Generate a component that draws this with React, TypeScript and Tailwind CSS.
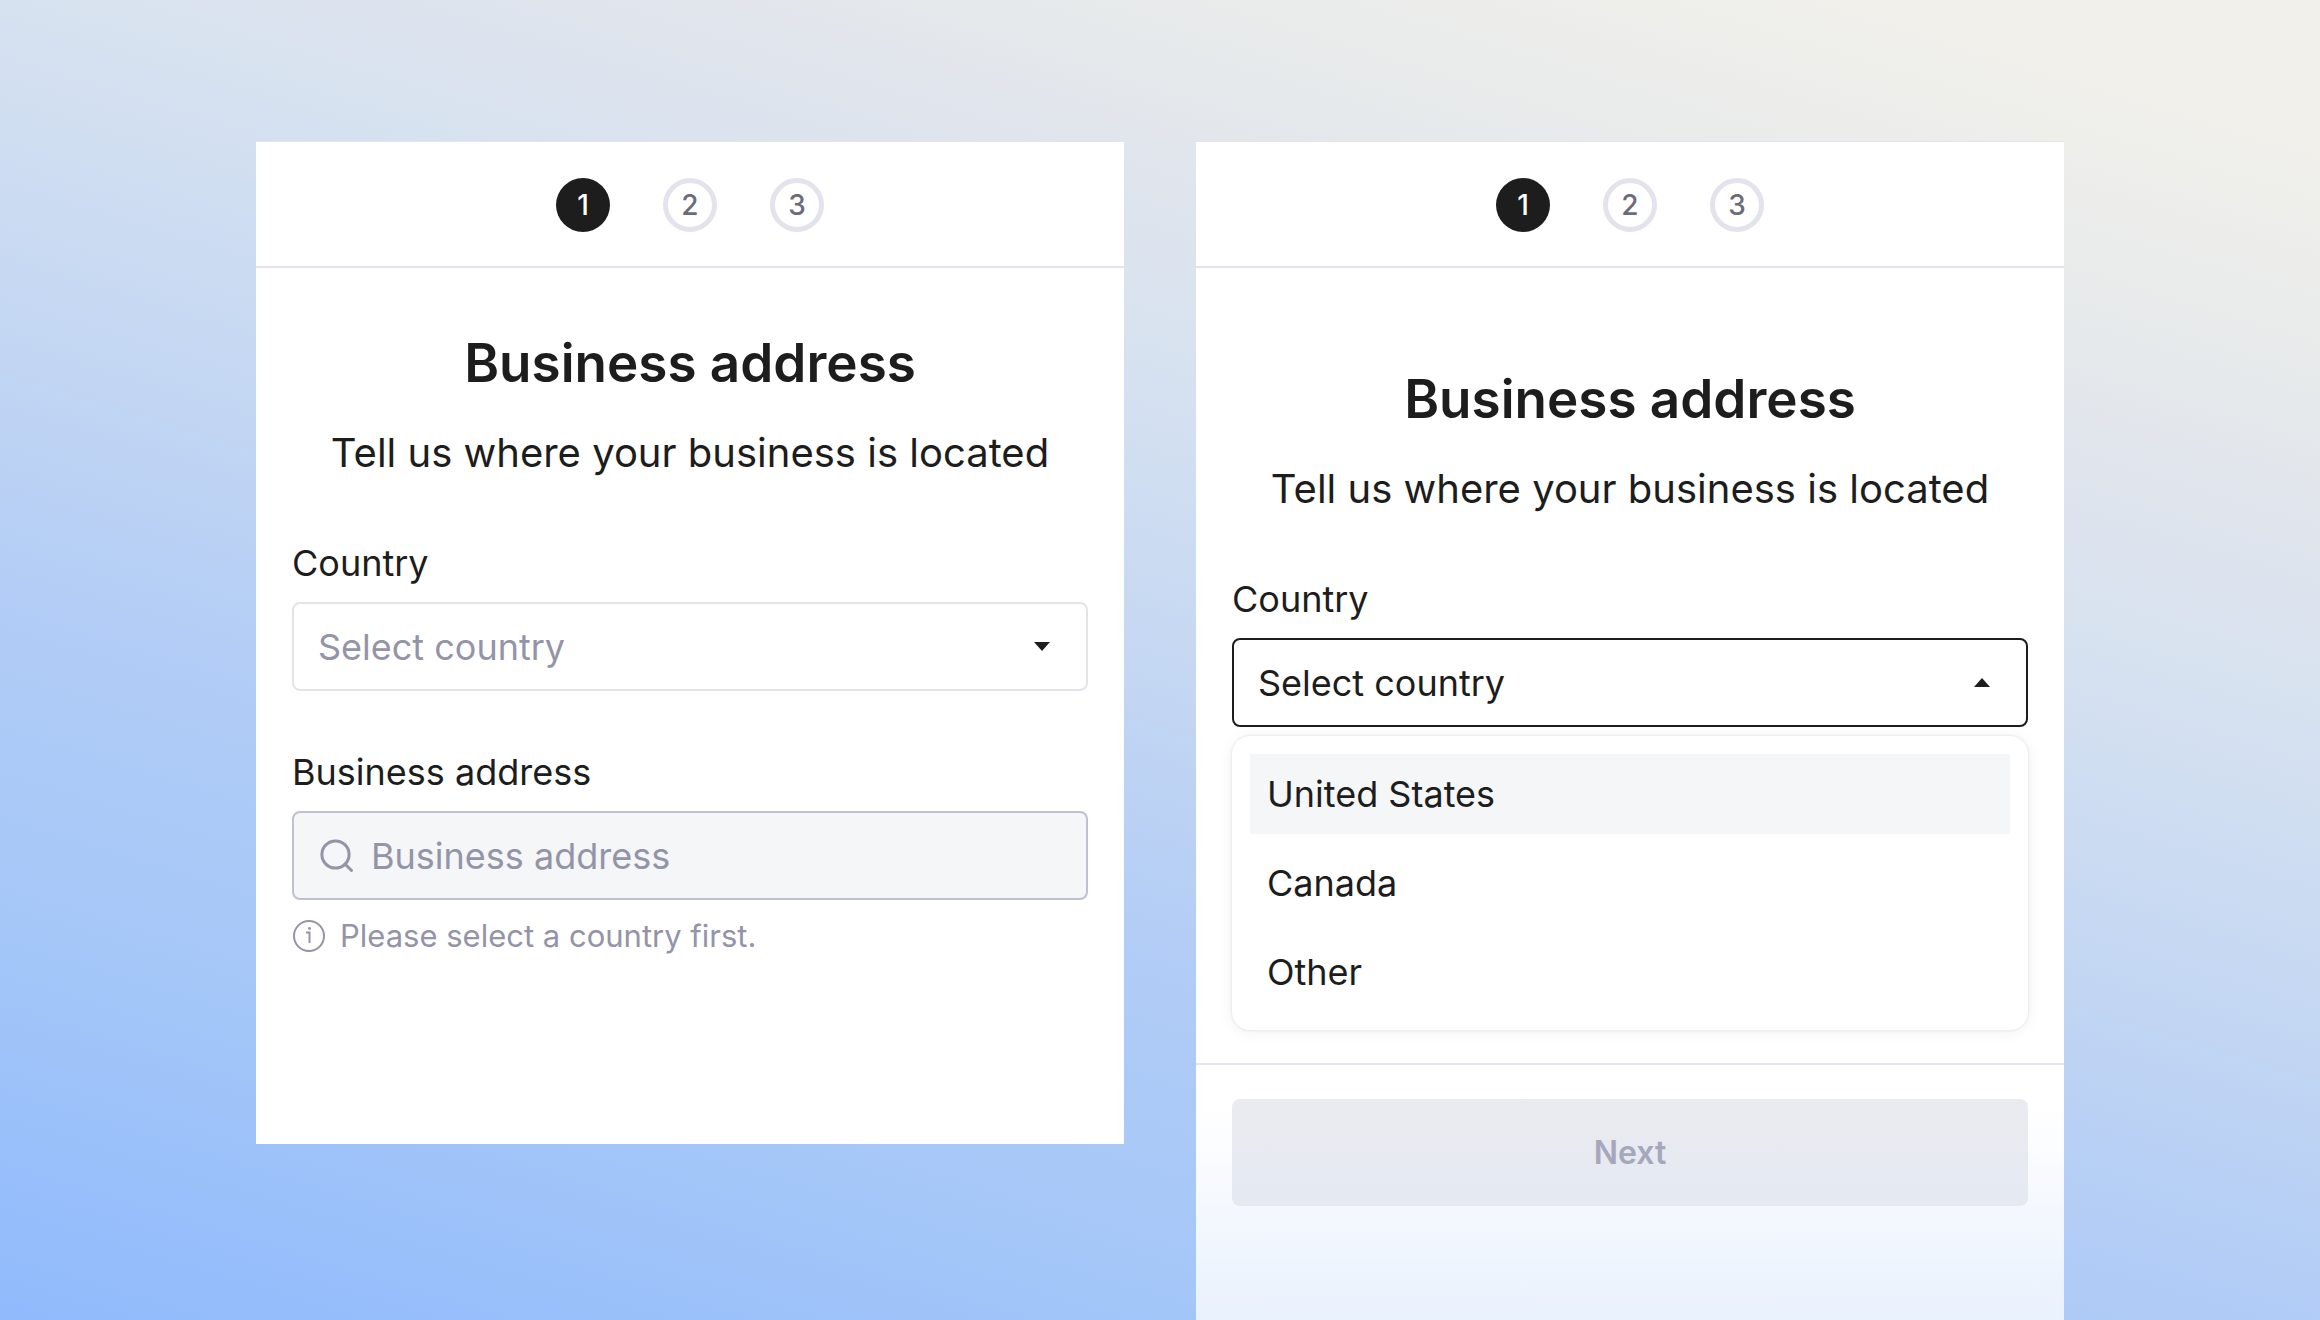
import React, { useState } from 'react';

const COUNTRIES = ['United States', 'Canada', 'Other'];
const STEPS = [1, 2, 3];

const Caret: React.FC<{ up?: boolean }> = ({ up }) => (
  <svg width="16" height="9" viewBox="0 0 16 9" fill="currentColor" aria-hidden="true" className="shrink-0">
    {up ? <path d="M8 0L16 9H0Z" /> : <path d="M0 0H16L8 9Z" />}
  </svg>
);

const SearchIcon: React.FC = () => (
  <svg width="34" height="34" viewBox="0 0 34 34" fill="none" stroke="currentColor" strokeWidth="3" aria-hidden="true" className="shrink-0">
    <circle cx="15.5" cy="15.5" r="13.6" />
    <path d="M25 25L31.5 31.5" strokeLinecap="round" />
  </svg>
);

const InfoIcon: React.FC = () => (
  <svg width="34" height="34" viewBox="0 0 34 34" fill="none" stroke="currentColor" strokeWidth="2" aria-hidden="true" className="shrink-0">
    <circle cx="17" cy="17" r="15" />
    <path d="M14 13.5H17.5V24" />
    <circle cx="17.5" cy="9.5" r="1.4" fill="currentColor" stroke="none" />
  </svg>
);

const Steps: React.FC<{ current: number }> = ({ current }) => (
  <ol className="flex justify-center gap-[53px] pt-9 pb-[34px] border-t border-b-2 border-t-[#e3e3ee] border-b-[#e3e3ee]">
    {STEPS.map((step) => (
      <li
        key={step}
        aria-current={step === current ? 'step' : undefined}
        className={
          step === current
            ? 'size-[54px] rounded-full flex items-center justify-center text-[28px] font-medium bg-[#1d1d1d] text-white'
            : 'size-[54px] rounded-full flex items-center justify-center text-[28px] font-medium border-5 border-[#e3e3ee] text-[#6b6b7b]'
        }
      >
        {step}
      </li>
    ))}
  </ol>
);

const Heading: React.FC = () => (
  <div className="text-center">
    <h2 className="text-[53px] leading-[64px] font-semibold">Business address</h2>
    <p className="mt-[34px] text-[40px] leading-[48px]">Tell us where your business is located</p>
  </div>
);

const AddressForm: React.FC = () => {
  const [country, setCountry] = useState('');
  const [address, setAddress] = useState('');

  return (
    <section className="self-start bg-white pb-[188px]">
      <Steps current={1} />
      <form className="px-9 pt-[63px]" onSubmit={(e) => e.preventDefault()}>
        <Heading />

        <div className="mt-16">
          <label htmlFor="country" className="block text-[36px] leading-[44px]">Country</label>
          <div className="relative mt-[17px]">
            <select
              id="country"
              value={country}
              onChange={(e) => setCountry(e.target.value)}
              className={`w-full h-[89px] appearance-none rounded-lg border-2 border-[#e3e3ea] bg-white pl-6 pr-16 text-[36px] outline-none focus:border-[#1d1d1d] ${country ? 'text-[#1d1d1d]' : 'text-[#9494a8]'}`}
            >
              <option value="" disabled>Select country</option>
              {COUNTRIES.map((name) => (
                <option key={name} value={name}>{name}</option>
              ))}
            </select>
            <span className="pointer-events-none absolute inset-y-0 right-[38px] flex items-center"><Caret /></span>
          </div>
        </div>

        <div className="mt-[59px]">
          <label htmlFor="address" className="block text-[36px] leading-[44px]">Business address</label>
          <div className="mt-[17px] flex h-[89px] items-center gap-[17px] rounded-lg border-2 border-[#bfc0d0] bg-[#f4f6f8] px-[26px] text-[#9494a8]">
            <SearchIcon />
            <input
              id="address"
              type="text"
              placeholder="Business address"
              aria-describedby="address-hint"
              value={address}
              onChange={(e) => setAddress(e.target.value)}
              disabled={!country}
              className="min-w-0 flex-1 bg-transparent text-[36px] outline-none placeholder:text-[#9494a8]"
            />
          </div>
          <p id="address-hint" className="mt-4 flex items-center gap-3.5 text-[31px] leading-[40px] text-[#9494a8]">
            <InfoIcon />
            Please select a country first.
          </p>
        </div>
      </form>
    </section>
  );
};

const CountryMenu: React.FC = () => {
  const [open, setOpen] = useState(true);
  const [selected, setSelected] = useState('');
  const [active, setActive] = useState(COUNTRIES[0]);

  const handleSelect = (name: string) => {
    setSelected(name);
    setOpen(false);
  };

  return (
    <section className="flex flex-col bg-white">
      <Steps current={1} />
      <div className="px-9 pt-[99px] pb-[33px]">
        <Heading />

        <div className="mt-16">
          <label htmlFor="country-menu" className="block text-[36px] leading-[44px]">Country</label>
          <button
            id="country-menu"
            type="button"
            aria-haspopup="listbox"
            aria-expanded={open}
            onClick={() => setOpen(!open)}
            className="mt-[17px] flex h-[89px] w-full items-center justify-between rounded-lg border-2 border-[#1d1d1d] bg-white pl-6 pr-9 text-[36px]"
          >
            {selected || 'Select country'}
            <Caret up={open} />
          </button>
          {open && (
            <ul role="listbox" aria-label="Country" className="mt-[9px] flex flex-col gap-[9px] rounded-[18px] bg-white p-[18px] shadow-[0_2px_16px_rgba(0,0,0,0.06),0_0_3px_rgba(0,0,0,0.12)]">
              {COUNTRIES.map((name) => (
                <li key={name} role="option" aria-selected={name === active}>
                  <button
                    type="button"
                    onMouseEnter={() => setActive(name)}
                    onClick={() => handleSelect(name)}
                    className={`h-20 w-full px-[17px] text-left text-[36px] ${name === active ? 'bg-[#f4f6f8]' : ''}`}
                  >
                    {name}
                  </button>
                </li>
              ))}
            </ul>
          )}
        </div>
      </div>

      <div className="flex-1 border-t-2 border-[#e1e4eb] bg-linear-to-b from-white from-15% to-[#e9f1fd] px-9 pt-[34px]">
        <button
          type="button"
          disabled={!selected}
          className="h-[107px] w-full rounded-lg bg-linear-to-b from-[#eaebef] to-[#e4e9f2] text-[32px] font-semibold text-[#a5a8bd]"
        >
          Next
        </button>
      </div>
    </section>
  );
};

const App: React.FC = () => (
  <main className="grid min-h-screen grid-cols-2 gap-[72px] px-64 pt-[141px] font-['Inter',sans-serif] text-[#1d1d1d] bg-[linear-gradient(17deg,#90bafc_0%,#a5c7f8_20%,#b1ccf6_35%,#c1d5f3_47%,#d7e2f0_65%,#dfe4ed_73%,#e7eaeb_81%,#f1f0eb_93%)]">
    <AddressForm />
    <CountryMenu />
  </main>
);

export default App;
